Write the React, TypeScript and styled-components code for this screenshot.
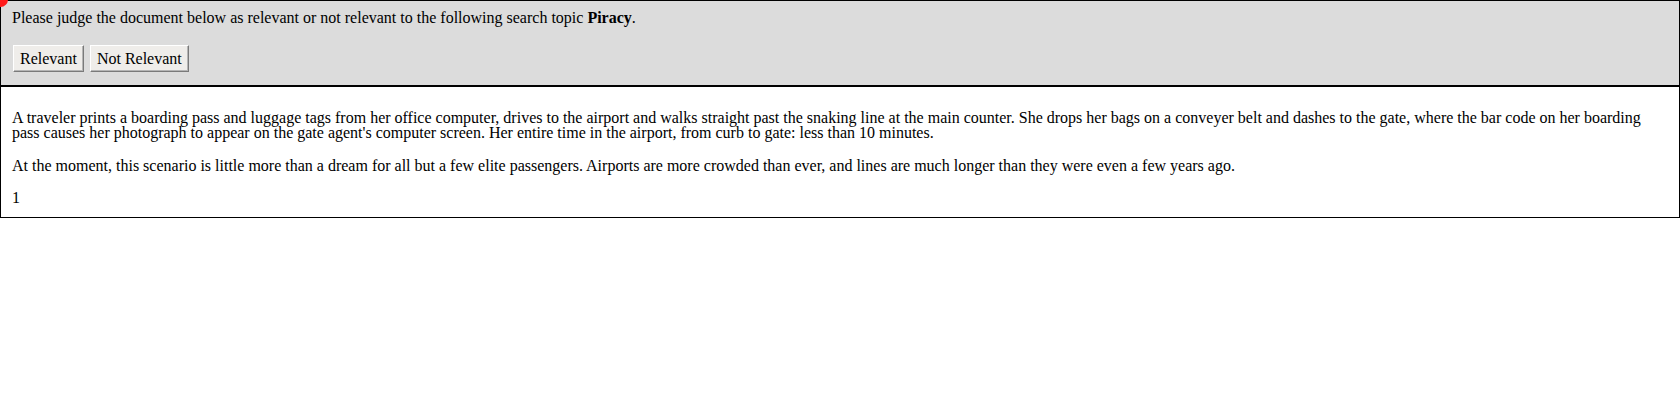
import React from "react";
import styled, { createGlobalStyle } from "styled-components";

const GlobalStyle = createGlobalStyle`
  html, body {
    margin: 0;
    padding: 0;
    background: #ffffff;
  }
  body {
    font-family: "Liberation Serif", "Times New Roman", serif;
    font-size: 16px;
    color: #000000;
  }
`;

const Page = styled.div`
  position: relative;
  width: 1680px;
  display: flex;
  flex-direction: column;
`;

const Marker = styled.span`
  position: absolute;
  top: -8px;
  left: -7px;
  width: 15px;
  height: 15px;
  border-radius: 50%;
  background: #ff1a1a;
`;

const Header = styled.div`
  background: #dcdcdc;
  border: 1px solid #000000;
  padding: 9px 10px 13px 11px;
  display: flex;
  flex-direction: column;
`;

const Prompt = styled.div`
  line-height: 16px;
`;

const ButtonRow = styled.div`
  display: flex;
  gap: 6px;
  margin-top: 19px;
  padding-left: 1px;
`;

const JudgeButton = styled.button`
  font-family: "Liberation Serif", "Times New Roman", serif;
  font-size: 16px;
  color: #000000;
  height: 27px;
  padding: 0 6px;
  margin: 0;
  background: #efedea;
  border: 1px solid;
  border-color: #ffffff #7a7a7a #7a7a7a #ffffff;
  box-shadow: inset -1px -1px 0 #b5b5b5;
  line-height: 23px;
  cursor: pointer;
`;

const Document = styled.div`
  border: 1px solid #000000;
  padding: 23px 10px 12px 11px;
  display: flex;
  flex-direction: column;
`;

const Paragraph = styled.p`
  margin: 0 0 18px;
  line-height: 15px;
`;

const PageNumber = styled.div`
  line-height: 15px;
  margin-top: -1px;
`;

export default function App() {
  return (
    <>
      <GlobalStyle />
      <Page>
        <Marker />
        <Header>
          <Prompt>
            Please judge the document below as relevant or not relevant to the
            following search topic <b>Piracy</b>.
          </Prompt>
          <ButtonRow>
            <JudgeButton>Relevant</JudgeButton>
            <JudgeButton>Not Relevant</JudgeButton>
          </ButtonRow>
        </Header>
        <Document>
          <Paragraph>
            A traveler prints a boarding pass and luggage tags from her office
            computer, drives to the airport and walks straight past the snaking
            line at the main counter. She drops her bags on a conveyer belt and
            dashes to the gate, where the bar code on her boarding pass causes
            her photograph to appear on the gate agent's computer screen. Her
            entire time in the airport, from curb to gate: less than 10 minutes.
          </Paragraph>
          <Paragraph>
            At the moment, this scenario is little more than a dream for all but
            a few elite passengers. Airports are more crowded than ever, and
            lines are much longer than they were even a few years ago.
          </Paragraph>
          <PageNumber>1</PageNumber>
        </Document>
      </Page>
    </>
  );
}
